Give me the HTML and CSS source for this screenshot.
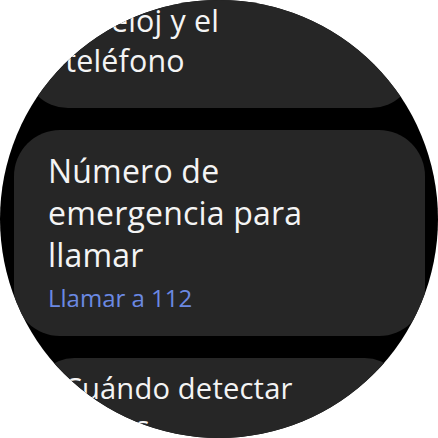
FILE: index.html
```html
<!DOCTYPE html>
<html lang="es">
<head>
<meta charset="utf-8">
<title>Número de emergencia</title>
<link rel="stylesheet" href="styles.css">
</head>
<body>
<div class="screen">
  <div class="list">
    <div class="card card-top">
      <div class="title">Sonar alarma en<br>el reloj y el<br>teléfono</div>
    </div>
    <div class="card card-main">
      <div class="title">Número de<br>emergencia para<br>llamar</div>
      <div class="subtitle">Llamar a 112</div>
    </div>
    <div class="card card-bottom">
      <div class="title">Cuándo detectar<br>caídas</div>
    </div>
  </div>
</div>
</body>
</html>
```

FILE: styles.css
```css
html, body {
  margin: 0;
  padding: 0;
  background: #ffffff;
}

.screen {
  width: 438px;
  height: 438px;
  border-radius: 50%;
  overflow: hidden;
  background: #000000;
  font-family: "Open Sans", "Roboto", sans-serif;
}

.list {
  display: flex;
  flex-direction: column;
  gap: 22px;
  padding: 0 13px 0 14px;
  margin-top: -67px;
}

.card {
  background: #262626;
  border-radius: 46px;
  padding: 20px 34px 22px;
}

.title {
  color: #f4f4f4;
  font-size: 32px;
  line-height: 42px;
  letter-spacing: 0.2px;
  white-space: nowrap;
}

.subtitle {
  color: #6b89e2;
  font-size: 24px;
  line-height: 32px;
  margin-top: 6px;
}

.card-top {
  padding-left: 43px;
  padding-bottom: 29px;
  transform: scale(0.95);
  transform-origin: 50% 100%;
}

.card-bottom {
  padding-top: 12px;
  transform: scale(0.91);
  transform-origin: 50% 0;
}
```
